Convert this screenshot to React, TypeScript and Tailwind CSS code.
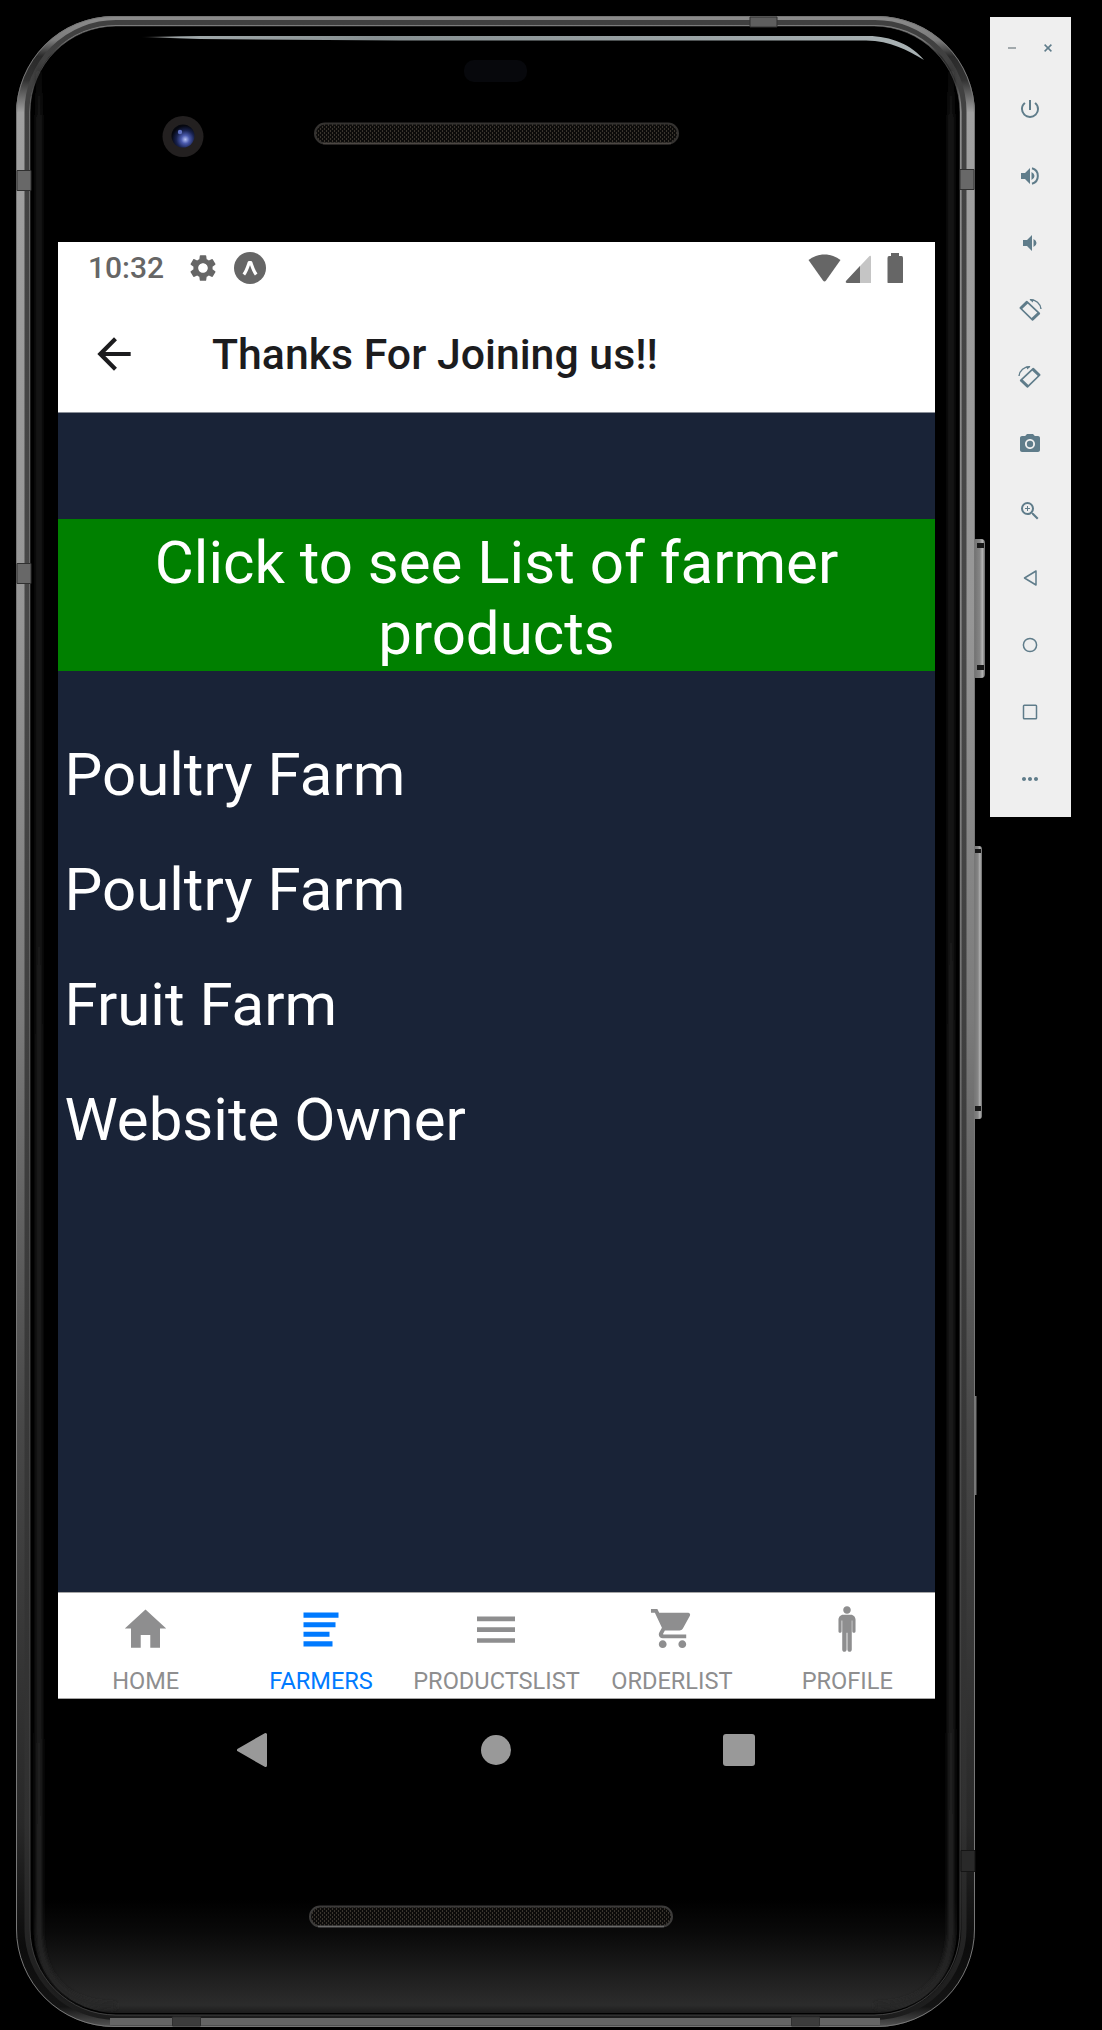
import React from 'react';
import {
  MdSettings, MdArrowBack, MdShoppingCart, MdPowerSettingsNew, MdCameraAlt, MdZoomIn, MdMoreHoriz,
} from 'react-icons/md';
import { IoMdHome, IoMdMan } from 'react-icons/io';

function DeviceBody() {
  return (
    <svg className="absolute inset-0 h-[2030px] w-[1102px]" viewBox="0 0 1102 2030" aria-hidden="true">
      <defs>
        <linearGradient id="metal" x1="0" y1="16" x2="0" y2="2027" gradientUnits="userSpaceOnUse">
          <stop offset="0" stopColor="#8c8c8c" />
          <stop offset=".012" stopColor="#7c7c7c" />
          <stop offset=".02" stopColor="#2a2a2a" />
          <stop offset=".032" stopColor="#333" />
          <stop offset=".048" stopColor="#a0a0a0" />
          <stop offset=".3" stopColor="#969696" />
          <stop offset=".5" stopColor="#7a7a7a" />
          <stop offset=".7" stopColor="#484848" />
          <stop offset=".9" stopColor="#282828" />
          <stop offset=".96" stopColor="#0c0c0c" />
          <stop offset=".99" stopColor="#141414" />
          <stop offset="1" stopColor="#555" />
        </linearGradient>
        <linearGradient id="lip" x1="0" y1="20" x2="0" y2="2020" gradientUnits="userSpaceOnUse">
          <stop offset="0" stopColor="#404040" />
          <stop offset=".3" stopColor="#484848" />
          <stop offset=".9" stopColor="#303030" />
          <stop offset="1" stopColor="#1c1c1c" />
        </linearGradient>
        <linearGradient id="bottomGlow" x1="0" y1="1900" x2="0" y2="2013" gradientUnits="userSpaceOnUse">
          <stop offset="0" stopColor="#000" />
          <stop offset=".3" stopColor="#0a0a0a" />
          <stop offset=".93" stopColor="#2c2c2c" />
          <stop offset="1" stopColor="#1c1c1c" />
        </linearGradient>
        <linearGradient id="sideGlow" x1="0" y1="60" x2="0" y2="2007" gradientUnits="userSpaceOnUse">
          <stop offset="0" stopColor="#1a1a1a" stopOpacity="0" />
          <stop offset=".03" stopColor="#1a1a1a" />
          <stop offset="1" stopColor="#262626" />
        </linearGradient>
        <linearGradient id="shine" x1="140" y1="0" x2="924" y2="0" gradientUnits="userSpaceOnUse">
          <stop offset="0" stopColor="#fff" stopOpacity="0" />
          <stop offset=".05" stopColor="#a2aaac" />
          <stop offset=".3" stopColor="#879092" />
          <stop offset="1" stopColor="#a9b2b4" />
        </linearGradient>
        <linearGradient id="key" x1="0" y1="0" x2="1" y2="0">
          <stop offset="0" stopColor="#6a6a6a" />
          <stop offset=".6" stopColor="#858585" />
          <stop offset=".8" stopColor="#b4b4b4" />
          <stop offset="1" stopColor="#666" />
        </linearGradient>
        <radialGradient id="lens" cx=".6" cy=".65" r=".6">
          <stop offset="0" stopColor="#b5c1f5" />
          <stop offset=".3" stopColor="#4a5aad" />
          <stop offset=".65" stopColor="#18224f" />
          <stop offset="1" stopColor="#05070f" />
        </radialGradient>
        <pattern id="mesh" width="4" height="4" patternUnits="userSpaceOnUse">
          <rect width="4" height="4" fill="#0d0c0b" />
          <rect width="1" height="2" x="0" fill="#3a352e" />
          <rect width="1" height="2" x="2" y="2" fill="#3a352e" />
        </pattern>
        <filter id="soft" x="-20" y="40" width="1020" height="1990" filterUnits="userSpaceOnUse">
          <feGaussianBlur stdDeviation="2" />
        </filter>
      </defs>

      <rect x="972" y="539" width="13" height="139" rx="4" fill="url(#key)" />
      <rect x="977" y="543" width="7" height="5" fill="#161616" />
      <rect x="977" y="665" width="7" height="5" fill="#161616" />
      <rect x="972" y="846" width="10" height="273" rx="3" fill="url(#key)" />
      <rect x="974" y="849" width="7" height="4" fill="#161616" />
      <rect x="974" y="1106" width="7" height="5" fill="#161616" />
      <rect x="975" y="1396" width="1.500" height="99" fill="#777" />

      <rect x="16" y="16" width="959" height="2011" rx="98" fill="url(#metal)" />
      <rect x="16.500" y="16.500" width="958" height="2010" rx="97.500" fill="none" stroke="#777" strokeWidth="1" />
      <rect x="27" y="22.500" width="937" height="1995" rx="89" fill="none" stroke="url(#lip)" strokeWidth="5" />
      <path d="M110 2021.500H880" stroke="#656565" strokeWidth="7" />
      <rect x="30" y="26" width="930" height="1989" rx="86" fill="#000" stroke="#606060" strokeOpacity=".6" />
      <path d="M34 1900H957V1931A82 82 0 0 1 875 2013H116A82 82 0 0 1 34 1931Z" fill="url(#bottomGlow)" />
      <g filter="url(#soft)" fill="none" stroke="url(#sideGlow)" strokeWidth="6">
        <path d="M39 60V1930Q41 2006 116 2006" />
        <path d="M951 60V1930Q949 2006 875 2006" />
      </g>

      <g stroke="#303030" strokeWidth="1">
        <path d="M17 170.500H31V190.500H17Z" fill="#686868" />
        <path d="M17 563.500H31V583.500H17Z" fill="#686868" />
        <path d="M960 169.500H974V189.500H960Z" fill="#686868" />
        <path d="M750 17V27H777V17Z" fill="#5e5e5e" />
        <path d="M961 1850.500H975V1871.500H961Z" fill="#292929" stroke="#151515" />
        <path d="M172.500 2017V2026H200.500V2017Z" fill="#3c3c3c" />
        <path d="M791.500 2017V2026H819.500V2017Z" fill="#3c3c3c" />
      </g>

      <path d="M140 37L200 36H868C891 36 912 45 924 60C907 50 891 41 866 40.500H400L200 39Z" fill="url(#shine)" />
      <rect x="464" y="60" width="63" height="22" rx="10" fill="#07080c" />
      <circle cx="183" cy="136.500" r="20.500" fill="#232020" />
      <circle cx="183" cy="136" r="11.500" fill="url(#lens)" />
      <circle cx="180" cy="132" r="2.200" fill="#6070c0" />
      <rect x="315" y="123.500" width="363" height="20" rx="10" fill="url(#mesh)" stroke="#343230" strokeWidth="2" />
      <path d="M323 143.500H671" stroke="#4c4743" strokeWidth="1.500" />
      <rect x="310" y="1906.500" width="362" height="20" rx="10" fill="url(#mesh)" stroke="#3c3b3a" strokeWidth="2" />
      <path d="M318 1926.500H664" stroke="#686868" strokeWidth="1.500" />
    </svg>
  );
}

function StatusBar() {
  return (
    <div className="flex h-[53px] items-center pb-[2px] pl-[30px] pr-[31px] text-[#666]">
      <span className="w-[98.500px] text-[30px] font-medium leading-none">10:32</span>
      <MdSettings className="h-8 w-8" />
      <svg className="ml-[15px] h-8 w-8" viewBox="0 0 32 32">
        <circle cx="16" cy="16" r="16" fill="currentColor" />
        <path d="M9.800 22.500C12.500 19 14 14 15.200 10.500H16.800C18 14 19.500 19 22.200 22.500" fill="none" stroke="#fff" strokeWidth="3.200" strokeLinejoin="round" />
      </svg>
      <svg className="ml-auto h-[30px] w-24" viewBox="0 0 96 30" fill="currentColor">
        <path d="M0.500 7C9 -0.500 24 -0.500 32.500 7L18 27.500Q16.500 29.500 15 27.500Z" />
        <path d="M38 30Q37 29 38 28L61.500 3Q63 2 63 4V30Z" fill="#c5c5c5" />
        <path d="M52 13V30H39Q37 29 38.500 27.500Z" />
        <path d="M83 0H91V3H93.500Q95 3 95 5V29Q95 30.500 93.500 30.500H81Q79.500 30.500 79.500 29V5Q79.500 3 81 3H83Z" />
      </svg>
    </div>
  );
}

const farms = ['Poultry Farm', 'Poultry Farm', 'Fruit Farm', 'Website Owner'];

const tabs = [
  { label: 'HOME', icon: <IoMdHome className="h-[51px] w-[51px]" /> },
  {
    label: 'FARMERS',
    active: true,
    icon: (
      <svg className="h-[44px] w-[44px]" viewBox="0 0 44 44" fill="currentColor">
        <path d="M4.500 5.500H39.500V10.700H4.500ZM4.500 15.200H36.500V20.200H4.500ZM4.500 24.700H30.500V29.700H4.500ZM4.500 34.300H33.500V39.500H4.500Z" />
      </svg>
    ),
  },
  {
    label: 'PRODUCTSLIST',
    icon: (
      <svg className="h-[44px] w-[44px]" viewBox="0 0 44 44" fill="currentColor">
        <path d="M3 9.500H41V14.300H3ZM3 20.300H41V25H3ZM3 31.200H41V35.800H3Z" />
      </svg>
    ),
  },
  { label: 'ORDERLIST', icon: <MdShoppingCart className="ml-[2px] h-[47px] w-[47px]" /> },
  { label: 'PROFILE', icon: <IoMdMan className="h-[52px] w-[52px]" /> },
];

function Toolbar() {
  const rotate = (
    <>
      <path d="M8.800 3.600L21.300 15.400 14.500 21.800 2.300 10Z" fill="none" stroke="currentColor" strokeWidth="1.700" strokeLinejoin="round" />
      <path d="M2.600 10.400L9.200 4.200M14.300 21.200L20.900 15" stroke="currentColor" strokeWidth="2.800" />
      <path d="M12 1.700C17.800 1.400 22.500 5.500 23 11" fill="none" stroke="currentColor" strokeWidth="1.400" />
      <path d="M11.500 1L16 1.500 14.500 4.500Z" fill="currentColor" />
    </>
  );
  const items = [
    <MdPowerSettingsNew key="power" className="h-6 w-6" />,
    <svg key="up" className="h-6 w-6" viewBox="0 0 24 24" fill="currentColor">
      <path d="M3 9V15H7L12 20V4L7 9ZM13.500 8V16Q16.500 14.700 16.500 12T13.500 8Z" />
      <path d="M14 4.300A8 8 0 0 1 14 19.700" fill="none" stroke="currentColor" strokeWidth="2" />
    </svg>,
    <svg key="down" className="h-6 w-6" viewBox="0 0 24 24" fill="currentColor">
      <path d="M5 9V15H9L14 20V4L9 9ZM15.500 8V16Q18.500 14.700 18.500 12T15.500 8Z" />
    </svg>,
    <svg key="left" className="h-6 w-6" viewBox="0 0 24 24">{rotate}</svg>,
    <svg key="right" className="h-6 w-6 -scale-x-100" viewBox="0 0 24 24">{rotate}</svg>,
    <MdCameraAlt key="camera" className="h-6 w-6" />,
    <MdZoomIn key="zoom" className="h-6 w-6" />,
    <svg key="back" className="h-6 w-6" viewBox="0 0 24 24" fill="none" stroke="currentColor" strokeWidth="1.500" strokeLinejoin="round"><path d="M18 5V19L6.500 12Z" /></svg>,
    <svg key="home" className="h-6 w-6" viewBox="0 0 24 24" fill="none" stroke="currentColor" strokeWidth="1.500"><circle cx="12" cy="12" r="6.600" /></svg>,
    <svg key="recent" className="h-6 w-6" viewBox="0 0 24 24" fill="none" stroke="currentColor" strokeWidth="1.500"><rect x="5.500" y="5.300" width="13" height="13.400" rx=".8" /></svg>,
    <MdMoreHoriz key="more" className="h-6 w-6" />,
  ];
  return (
    <aside className="relative ml-[55px] mt-[17px] flex h-[800px] w-[81px] flex-col items-center bg-[#efefef] text-[#5f7c8a]">
      <div className="flex h-[58px] w-full items-center justify-between pl-[18px] pr-[19px] pt-[3px]">
        <span className="h-[2px] w-[8px] bg-[#a2a9ac]" />
        <svg className="h-2 w-2" viewBox="0 0 8 8" stroke="currentColor" strokeWidth="1.500"><path d="M.6.6L7.400 7.400M7.400.6L.6 7.400" /></svg>
      </div>
      {items.map((item, i) => (
        <div key={i} className="flex h-[67px] w-full items-center justify-center pr-px">{item}</div>
      ))}
    </aside>
  );
}

export default function App() {
  return (
    <div className="relative flex h-[2030px] w-[1102px] items-start overflow-hidden bg-black font-['Roboto',sans-serif]">
      <DeviceBody />
      <main className="relative ml-[58px] mt-[242px] w-[877px]">
        <div className="flex h-[1456.500px] flex-col bg-white">
          <StatusBar />
          <header className="flex h-[118px] items-center border-b border-[#8a8f98] pl-[31px] text-[#1c1c1e]">
            <MdArrowBack className="h-[50px] w-[50px]" />
            <h1 className="ml-[73px] pt-[2px] text-[42.800px] font-medium leading-none">Thanks For Joining us!!</h1>
          </header>
          <section className="flex-1 bg-[#192337] pt-[106px] text-white">
            <p className="h-[152px] bg-[#008000] px-10 pt-[8px] text-center text-[60px] leading-[71px]">
              Click to see List of farmer products
            </p>
            <ul className="pl-[6.500px] pt-[66px] text-[60px] leading-[75px]">
              {farms.map((farm, i) => (
                <li key={i} className="h-[115px]">{farm}</li>
              ))}
            </ul>
          </section>
          <nav className="grid h-[107px] grid-cols-5 border-y border-[#a5a5a5] text-[#8e8e8f]">
            {tabs.map((tab) => (
              <div key={tab.label} className={tab.active ? 'flex flex-col items-center text-[#007aff]' : 'flex flex-col items-center'}>
                <div className="flex h-[74px] items-center justify-center pb-[2px]">{tab.icon}</div>
                <span className="text-[23.600px] leading-[28px]">{tab.label}</span>
              </div>
            ))}
          </nav>
        </div>
        <div className="flex h-[102px] items-center justify-between pl-[178px] pr-[180px] text-[#999]">
          <svg className="h-9 w-8" viewBox="0 0 32 36" fill="currentColor" stroke="currentColor" strokeWidth="3" strokeLinejoin="round"><path d="M2.500 18L29.500 2.500V33.500Z" /></svg>
          <span className="h-[30px] w-[30px] rounded-full bg-[#999]" />
          <span className="h-8 w-8 rounded-[3px] bg-[#999]" />
        </div>
      </main>
      <Toolbar />
    </div>
  );
}
